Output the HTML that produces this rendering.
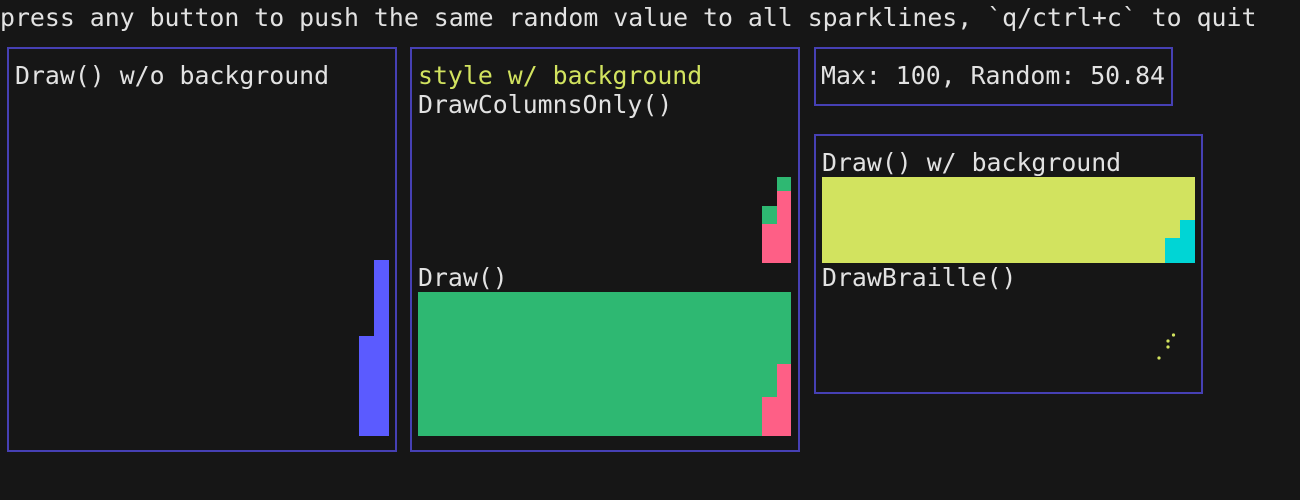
<!DOCTYPE html>
<html><head><meta charset="utf-8"><style>
html,body{margin:0;padding:0;background:#161616;width:1300px;height:500px;overflow:hidden}
body{position:relative;font-family:"DejaVu Sans Mono","Liberation Mono",monospace;font-size:24.85px;color:#e2e2e2}
.t{position:absolute;line-height:28px;white-space:pre}
.b{position:absolute;border:2px solid #4640b4;box-sizing:border-box}
.r{position:absolute}
</style></head><body>
<div class="t" style="left:0;top:4px">press any button to push the same random value to all sparklines, `q/ctrl+c` to quit</div>

<div class="b" style="left:7px;top:47px;width:390px;height:405px"></div>
<div class="t" style="left:15px;top:62px">Draw() w/o background</div>
<div class="r" style="left:374px;top:260px;width:15px;height:176px;background:#5b5bff"></div>
<div class="r" style="left:359px;top:336px;width:15px;height:100px;background:#5b5bff"></div>

<div class="b" style="left:410px;top:47px;width:390px;height:405px"></div>
<div class="t" style="left:418px;top:62px;color:#d2e35f">style w/ background</div>
<div class="t" style="left:418px;top:91px">DrawColumnsOnly()</div>
<div class="r" style="left:777px;top:177px;width:14px;height:14px;background:#2eb872"></div>
<div class="r" style="left:777px;top:191px;width:14px;height:72px;background:#fe5f86"></div>
<div class="r" style="left:762px;top:206px;width:15px;height:18px;background:#2eb872"></div>
<div class="r" style="left:762px;top:224px;width:15px;height:39px;background:#fe5f86"></div>
<div class="t" style="left:418px;top:264px">Draw()</div>
<div class="r" style="left:418px;top:292px;width:373px;height:144px;background:#2eb872"></div>
<div class="r" style="left:777px;top:364px;width:14px;height:72px;background:#fe5f86"></div>
<div class="r" style="left:762px;top:397px;width:15px;height:39px;background:#fe5f86"></div>

<div class="b" style="left:814px;top:47px;width:359px;height:59px"></div>
<div class="t" style="left:821px;top:62px">Max: 100, Random: 50.84</div>

<div class="b" style="left:814px;top:134px;width:389px;height:260px"></div>
<div class="t" style="left:822px;top:149px">Draw() w/ background</div>
<div class="r" style="left:822px;top:177px;width:373px;height:86px;background:#d2e35f"></div>
<div class="r" style="left:1180px;top:220px;width:15px;height:43px;background:#00d5d5"></div>
<div class="r" style="left:1165px;top:238px;width:15px;height:25px;background:#00d5d5"></div>
<div class="t" style="left:822px;top:264px">DrawBraille()</div>
<svg class="r" style="left:0;top:0" width="1300" height="500">
<g fill="#d2e35f"><circle cx="1173.5" cy="335" r="1.6"/><circle cx="1168" cy="341" r="1.6"/><circle cx="1168" cy="347" r="1.6"/><circle cx="1159" cy="358" r="1.6"/></g>
</svg>
</body></html>
